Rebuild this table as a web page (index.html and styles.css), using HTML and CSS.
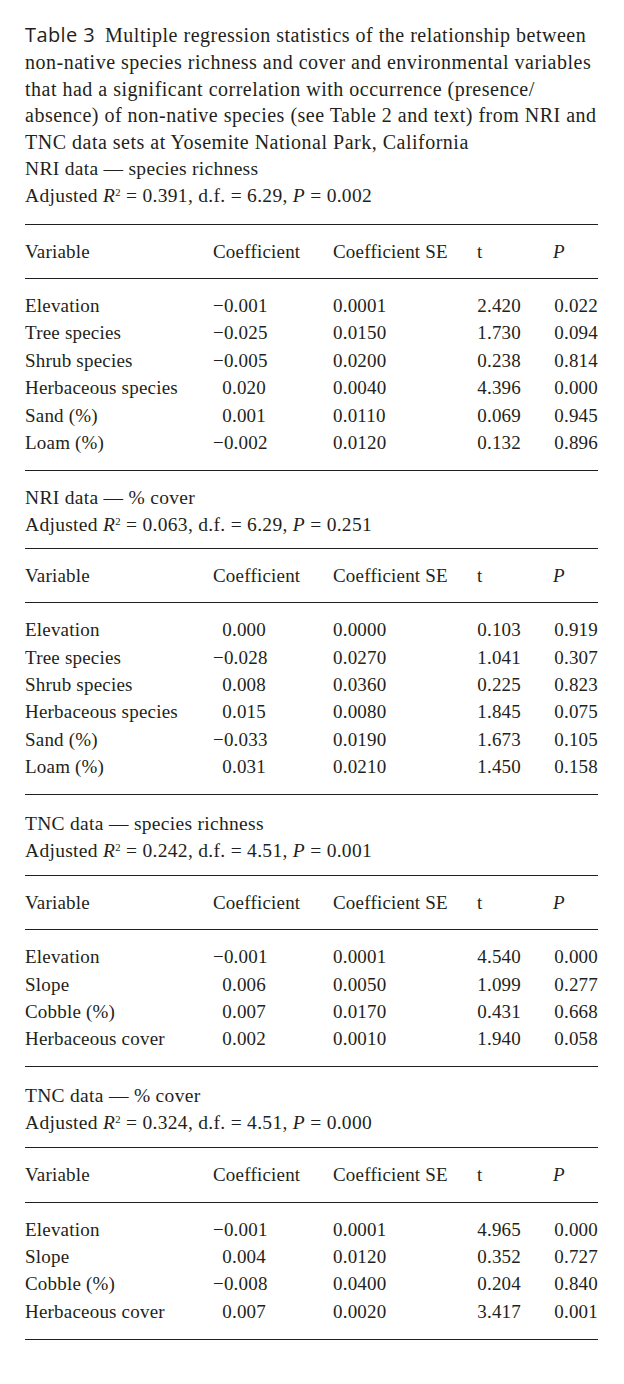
FILE: index.html
```html
<!DOCTYPE html>
<html>
<head>
<meta charset="utf-8">
<link rel="stylesheet" href="styles.css">
</head>
<body>
<div class="page">
  <div class="caption first">
    <p class="title"><span class="label">Table 3</span>Multiple regression statistics of the relationship between<br>non-native species richness and cover and environmental variables<br>that had a significant correlation with occurrence (presence/<br>absence) of non-native species (see Table 2 and text) from NRI and<br>TNC data sets at Yosemite National Park, California</p>
    <p>NRI data — species richness</p>
    <p>Adjusted <i>R</i><sup>2</sup> = 0.391, d.f. = 6.29, <i>P</i> = 0.002</p>
  </div>
  <div class="grid">
    <div class="hd">Variable</div><div class="hd">Coefficient</div><div class="hd">Coefficient SE</div><div class="hd">t</div><div class="hd"><i>P</i></div>
  </div>
  <div class="grid body">
    <div>Elevation</div><div class="c">−0.001</div><div>0.0001</div><div class="t">2.420</div><div class="p">0.022</div>
    <div>Tree species</div><div class="c">−0.025</div><div>0.0150</div><div class="t">1.730</div><div class="p">0.094</div>
    <div>Shrub species</div><div class="c">−0.005</div><div>0.0200</div><div class="t">0.238</div><div class="p">0.814</div>
    <div>Herbaceous species</div><div class="c">0.020</div><div>0.0040</div><div class="t">4.396</div><div class="p">0.000</div>
    <div>Sand (%)</div><div class="c">0.001</div><div>0.0110</div><div class="t">0.069</div><div class="p">0.945</div>
    <div>Loam (%)</div><div class="c">−0.002</div><div>0.0120</div><div class="t">0.132</div><div class="p">0.896</div>
  </div>

  <div class="caption">
    <p>NRI data — % cover</p>
    <p>Adjusted <i>R</i><sup>2</sup> = 0.063, d.f. = 6.29, <i>P</i> = 0.251</p>
  </div>
  <div class="grid">
    <div class="hd">Variable</div><div class="hd">Coefficient</div><div class="hd">Coefficient SE</div><div class="hd">t</div><div class="hd"><i>P</i></div>
  </div>
  <div class="grid body">
    <div>Elevation</div><div class="c">0.000</div><div>0.0000</div><div class="t">0.103</div><div class="p">0.919</div>
    <div>Tree species</div><div class="c">−0.028</div><div>0.0270</div><div class="t">1.041</div><div class="p">0.307</div>
    <div>Shrub species</div><div class="c">0.008</div><div>0.0360</div><div class="t">0.225</div><div class="p">0.823</div>
    <div>Herbaceous species</div><div class="c">0.015</div><div>0.0080</div><div class="t">1.845</div><div class="p">0.075</div>
    <div>Sand (%)</div><div class="c">−0.033</div><div>0.0190</div><div class="t">1.673</div><div class="p">0.105</div>
    <div>Loam (%)</div><div class="c">0.031</div><div>0.0210</div><div class="t">1.450</div><div class="p">0.158</div>
  </div>

  <div class="caption tall">
    <p>TNC data — species richness</p>
    <p>Adjusted <i>R</i><sup>2</sup> = 0.242, d.f. = 4.51, <i>P</i> = 0.001</p>
  </div>
  <div class="grid">
    <div class="hd">Variable</div><div class="hd">Coefficient</div><div class="hd">Coefficient SE</div><div class="hd">t</div><div class="hd"><i>P</i></div>
  </div>
  <div class="grid body">
    <div>Elevation</div><div class="c">−0.001</div><div>0.0001</div><div class="t">4.540</div><div class="p">0.000</div>
    <div>Slope</div><div class="c">0.006</div><div>0.0050</div><div class="t">1.099</div><div class="p">0.277</div>
    <div>Cobble (%)</div><div class="c">0.007</div><div>0.0170</div><div class="t">0.431</div><div class="p">0.668</div>
    <div>Herbaceous cover</div><div class="c">0.002</div><div>0.0010</div><div class="t">1.940</div><div class="p">0.058</div>
  </div>

  <div class="caption tall">
    <p>TNC data — % cover</p>
    <p>Adjusted <i>R</i><sup>2</sup> = 0.324, d.f. = 4.51, <i>P</i> = 0.000</p>
  </div>
  <div class="grid">
    <div class="hd">Variable</div><div class="hd">Coefficient</div><div class="hd">Coefficient SE</div><div class="hd">t</div><div class="hd"><i>P</i></div>
  </div>
  <div class="grid body">
    <div>Elevation</div><div class="c">−0.001</div><div>0.0001</div><div class="t">4.965</div><div class="p">0.000</div>
    <div>Slope</div><div class="c">0.004</div><div>0.0120</div><div class="t">0.352</div><div class="p">0.727</div>
    <div>Cobble (%)</div><div class="c">−0.008</div><div>0.0400</div><div class="t">0.204</div><div class="p">0.840</div>
    <div>Herbaceous cover</div><div class="c">0.007</div><div>0.0020</div><div class="t">3.417</div><div class="p">0.001</div>
  </div>
</div>
</body>
</html>
```

FILE: styles.css
```css
html, body {
  margin: 0;
  padding: 0;
  background: #ffffff;
}
.page {
  width: 573px;
  padding: 14px 0 0 25px;
  font-family: "Liberation Serif", "Times New Roman", serif;
  font-size: 19px;
  letter-spacing: 0.2px;
  color: #231f20;
}
.caption p {
  margin: 0;
  line-height: 27px;
  white-space: nowrap;
  font-size: 19.5px;
  letter-spacing: 0.3px;
}
.caption {
  padding: 13px 0 10px;
  border-bottom: 1px solid #231f20;
}
.caption.tall {
  padding: 15px 0 11px;
}
.caption.first {
  padding: 8px 0 14px;
}
.caption.first p {
  line-height: 26.8px;
}
.caption p.title {
  font-size: 20px;
  letter-spacing: 0.5px;
}
.label {
  font-family: "Open Sans", "Liberation Sans", sans-serif;
  font-size: 20px;
  letter-spacing: 0.4px;
  margin-right: 10px;
}
sup {
  font-size: 0.55em;
  line-height: 0;
  vertical-align: 0.6em;
}
.grid {
  display: grid;
  grid-template-columns: 188px 120px 144px 76px 45px;
  border-bottom: 1px solid #231f20;
}
.grid > div {
  line-height: 27.4px;
  white-space: nowrap;
}
.hd {
  padding: 13px 0;
}
.grid.body {
  padding: 13px 0 13.3px;
}
.c {
  text-align: right;
  padding-right: 67px;
}
.t {
  text-align: right;
  padding-right: 32px;
}
.p {
  text-align: right;
}
```
